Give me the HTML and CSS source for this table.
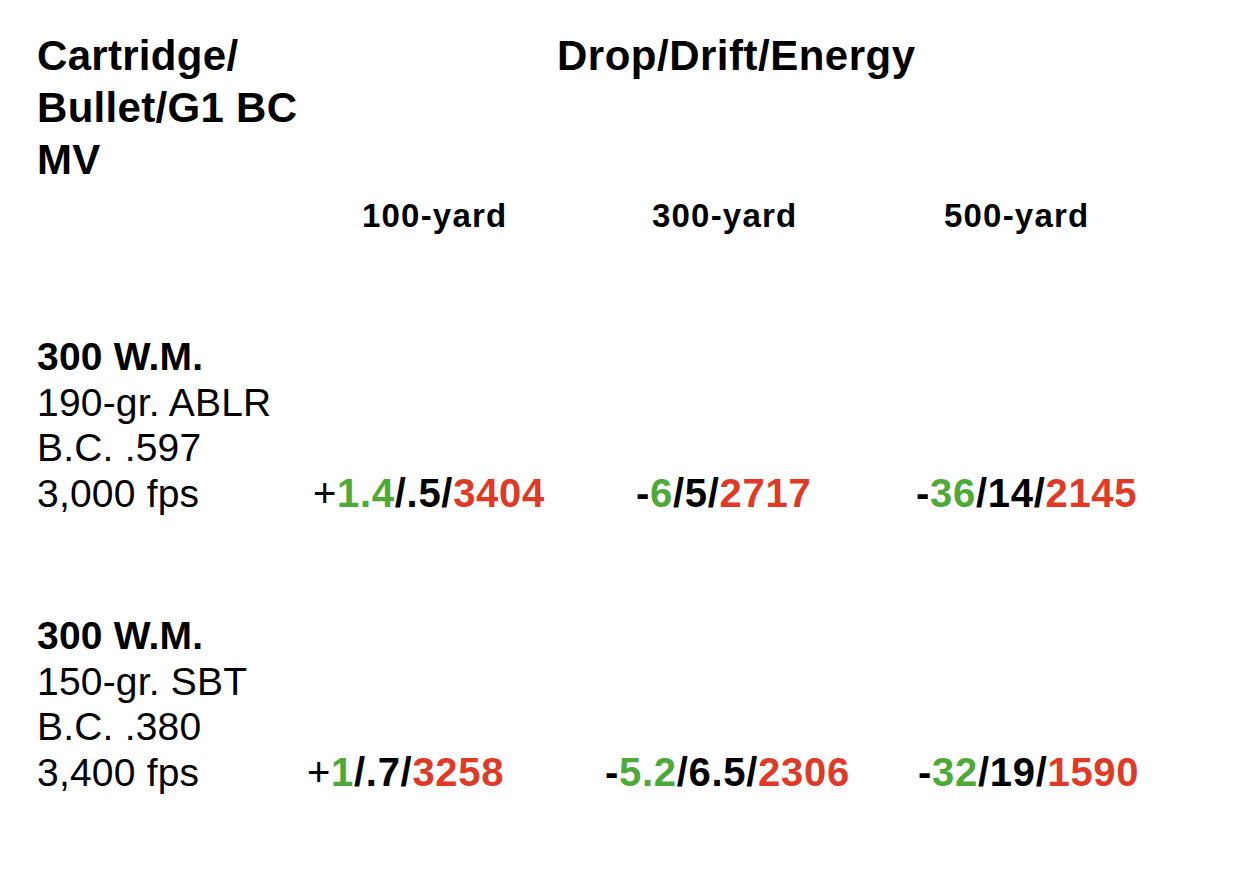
FILE: index.html
```html
<!DOCTYPE html>
<html>
<head>
<meta charset="utf-8">
<link rel="stylesheet" href="styles.css">
</head>
<body>
<div class="sheet">
  <div class="row head">
    <div class="h-left">Cartridge/<br>Bullet/G1 BC<br>MV</div>
    <div class="h-title">Drop/Drift/Energy</div>
  </div>
  <div class="row colheads">
    <div></div>
    <div class="ch">100-yard</div>
    <div class="ch">300-yard</div>
    <div class="ch">500-yard</div>
  </div>
  <div class="row data r1">
    <div class="desc"><b>300 W.M.</b><br>190-gr. ABLR<br>B.C. .597<br>3,000 fps</div>
    <div class="val v11"><span class="sign">+</span><span class="g">1.4</span>/.5/<span class="r">3404</span></div>
    <div class="val v12">-<span class="g">6</span>/5/<span class="r">2717</span></div>
    <div class="val v13">-<span class="g">36</span>/14/<span class="r">2145</span></div>
  </div>
  <div class="row data r2">
    <div class="desc"><b>300 W.M.</b><br>150-gr. SBT<br>B.C. .380<br>3,400 fps</div>
    <div class="val v21"><span class="sign">+</span><span class="g">1</span>/.7/<span class="r">3258</span></div>
    <div class="val v22">-<span class="g">5.2</span>/6.5/<span class="r">2306</span></div>
    <div class="val v23">-<span class="g">32</span>/19/<span class="r">1590</span></div>
  </div>
</div>
</body>
</html>
```

FILE: styles.css
```css
html, body {
  margin: 0;
  padding: 0;
  background: #ffffff;
}
body {
  font-family: "Liberation Sans", Arial, Helvetica, sans-serif;
  color: #000;
}
.sheet {
  width: 1244px;
  height: 876px;
  padding: 30px 0 0 37px;
  box-sizing: border-box;
}
.row {
  display: grid;
  grid-template-columns: 270px 290px 292px 292px;
}
.head {
  font-weight: bold;
  font-size: 42px;
  letter-spacing: 0.3px;
  line-height: 52px;
}
.h-title {
  grid-column: 2 / 5;
  padding-left: 250px;
  letter-spacing: 0.5px;
}
.colheads {
  margin-top: 12px;
  font-weight: bold;
  font-size: 33px;
  letter-spacing: 1.2px;
  line-height: 36px;
}
.ch {
  padding-left: 55px;
}
.data {
  font-size: 39px;
  letter-spacing: 0.2px;
  line-height: 45.5px;
}
.r1 { margin-top: 100px; }
.r2 { margin-top: 97px; }
.desc b {
  font-weight: bold;
}
.val {
  align-self: end;
  font-weight: bold;
  font-size: 40px;
  letter-spacing: 0.7px;
}
.sign { font-weight: normal; }
.g { color: #4eaa38; }
.r { color: #e03a26; }
.v11 { padding-left: 6px; }
.v12 { padding-left: 39px; }
.v13 { padding-left: 27px; }
.v21 { padding-left: 0; }
.v22 { padding-left: 8px; }
.v23 { padding-left: 29px; }
```
